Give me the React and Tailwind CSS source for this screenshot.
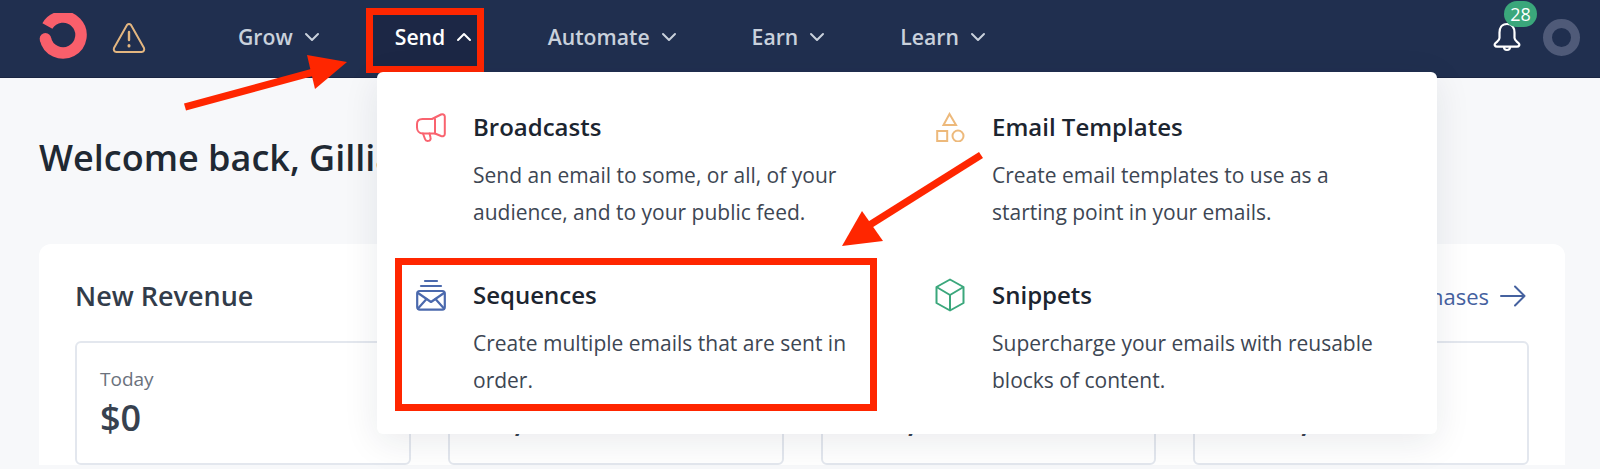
import React from "react";

const Chevron = ({ up, className }) => (
  <svg width="16" height="10" viewBox="0 0 16 10" fill="none" stroke="currentColor" strokeWidth="2" strokeLinecap="round" strokeLinejoin="round" className={className}>
    {up ? <path d="M2 8 L8 2 L14 8" /> : <path d="M2 2 L8 8 L14 2" />}
  </svg>
);

const NavItem = ({ label, className = "" }) => (
  <div className={`flex items-center gap-[11px] text-[21.2px] font-semibold text-[#c9d1dc] ${className}`}>
    <span>{label}</span>
    <Chevron />
  </div>
);

const Logo = () => (
  <svg width="50" height="48" viewBox="0 0 50 48" fill="none" className="shrink-0">
    <path d="M9.4 13 A18 18 0 1 1 7.4 25.7" stroke="#f95f6b" strokeWidth="11.5" />
    <circle cx="7.4" cy="25.7" r="5.75" fill="#f95f6b" />
  </svg>
);

const Warning = () => (
  <svg width="34" height="31" viewBox="0 0 34 31" fill="none" stroke="#e3b680" strokeWidth="2" strokeLinecap="round" strokeLinejoin="round" className="shrink-0 ml-[24px]">
    <path d="M15 3 Q17 0.8 19 3 L32 26 Q33 29.5 29.5 30 L4.5 30 Q1 29.5 2 26 Z" />
    <path d="M17 10 L17 18" strokeWidth="2.4" />
    <path d="M17 23.6 L17 23.9" strokeWidth="3" />
  </svg>
);

const Bell = () => (
  <svg width="28" height="30" viewBox="0 0 28 30" fill="none" stroke="#ffffff" strokeWidth="2.2" strokeLinecap="round" strokeLinejoin="round">
    <path d="M14 2 C8.5 2 6.5 6 6.5 10.5 L6.5 16 C6.5 18.5 4 19.5 2.2 21.5 C1 23 2 24.6 4 24.6 L24 24.6 C26 24.6 27 23 25.8 21.5 C24 19.5 21.5 18.5 21.5 16 L21.5 10.5 C21.5 6 19.5 2 14 2 Z" />
    <path d="M11 25 C11 29 17 29 17 25" />
  </svg>
);

const Megaphone = () => (
  <svg width="30" height="30" viewBox="0 0 30 30" fill="none" stroke="#f9636f" strokeWidth="2" strokeLinecap="round" strokeLinejoin="round">
    <path d="M25 2.5 C26.5 1.8 28.8 2.5 28.8 4.5 L28.8 22 C28.8 24 26.8 24.6 25 24 L19 21.5 L7 21.5 C3 21.5 1 18.5 1 15.5 L1 12 C1 9 3 7 6.5 7 L16 7 Z" />
    <path d="M19 7 L19 21.5" />
    <path d="M7 21.5 L9 27 C10 30 15.5 29.5 14.5 25.5 L13.6 21.5" />
  </svg>
);

const Envelope = () => (
  <svg width="30" height="32" viewBox="0 0 30 32" fill="none" stroke="#4b69ad" strokeWidth="2.2" strokeLinecap="round" strokeLinejoin="round">
    <path d="M9 2 L21 2" />
    <path d="M5 7 L25 7" />
    <rect x="1.2" y="12" width="27.6" height="18.6" rx="2.5" />
    <path d="M2 14 L15 23 L28 14" />
    <path d="M2 29.5 L10.5 20" />
    <path d="M28 29.5 L19.5 20" />
  </svg>
);

const Shapes = () => (
  <svg width="30" height="30" viewBox="0 0 30 30" fill="none" stroke="#edb97b" strokeWidth="2">
    <path d="M14.5 2 L21 13 L8.5 13 Z" strokeLinejoin="miter" />
    <rect x="2.2" y="19" width="10" height="10" />
    <circle cx="23" cy="24" r="5.5" />
  </svg>
);

const Cube = () => (
  <svg width="30" height="34" viewBox="0 0 30 34" fill="none" stroke="#3ba77c" strokeWidth="2" strokeLinejoin="round">
    <path d="M15 1.5 L28.5 9 L28.5 25 L15 32.5 L1.5 25 L1.5 9 Z" />
    <path d="M1.5 9 L15 17 L28.5 9" />
    <path d="M15 17 L15 32.5" />
  </svg>
);

const MenuItem = ({ icon, title, children }) => (
  <div className="flex">
    <div className="w-[30px] h-[36px] mr-[27px] shrink-0 flex items-center">{icon}</div>
    <div className="w-[385px]">
      <div className="text-[24px] leading-[36px] font-semibold text-[#1c2530]">{title}</div>
      <div className="mt-[12px] text-[21px] leading-[37px] text-[#3d4653]">{children}</div>
    </div>
  </div>
);

const StatBox = ({ label, value }) => (
  <div className="flex-1 h-[124px] rounded-[6px] border-2 border-[#e3e7ee] pl-[23px] pt-[22px]">
    <div className="text-[19px] leading-[28px] text-[#6b727d]">{label}</div>
    <div className="text-[36px] leading-[50px] font-semibold text-[#37414f]">{value}</div>
  </div>
);

export default function App() {
  return (
    <div className="relative w-[1600px] h-[469px] overflow-hidden bg-[#f7f8fa] font-['Open_Sans',sans-serif]">
      <header className="h-[78px] bg-[#202f4f] border-b border-[#1a2542] flex items-center pl-[38px] pr-[20px] pb-[3px]">
        <Logo />
        <Warning />
        <NavItem label="Grow" className="ml-[92px]" />
        <div className="ml-[46px] w-[118px] h-[65px] mt-[6px] border-[7px] border-[#ff2600] bg-[#1c2745] flex items-center gap-[11px] pl-[22px] pb-[7px] text-[21.2px] font-semibold text-white">
          <span>Send</span>
          <Chevron up />
        </div>
        <NavItem label="Automate" className="ml-[64px]" />
        <NavItem label="Earn" className="ml-[75px]" />
        <NavItem label="Learn" className="ml-[75px]" />
        <div className="ml-auto flex items-center">
          <div className="relative w-[28px] h-[30px] mr-[22px]">
            <Bell />
            <span className="absolute left-[11px] -top-[21px] w-[33px] h-[26px] rounded-full bg-[#3aa77b] text-white text-[18px] leading-[26px] text-center">28</span>
          </div>
          <div className="w-[37px] h-[37px] rounded-full border-[9px] border-[#4f5a78]" />
        </div>
      </header>

      <main className="pl-[39px] pr-[35px]">
        <h1 className="pt-[55px] text-[36px] leading-[50px] font-semibold text-[#1f2933]">Welcome back, Gillian</h1>
        <section className="mt-[61px] bg-white rounded-t-[12px] px-[36px] pt-[32px]">
          <div className="flex items-center justify-between h-[40px]">
            <h2 className="text-[27px] font-semibold text-[#323c4a]">New Revenue</h2>
            <div className="flex items-center gap-[11px] text-[22px] text-[#45619f] mr-[3px]">
              <span>Purchases</span>
              <svg width="26" height="22" viewBox="0 0 26 22" fill="none" stroke="currentColor" strokeWidth="2" strokeLinecap="round" strokeLinejoin="round">
                <path d="M1 11 L24.5 11 M15 1.5 L24.5 11 L15 20.5" />
              </svg>
            </div>
          </div>
          <div className="mt-[25px] flex gap-[37px]">
            <StatBox label="Today" value="$0" />
            <StatBox label={"\u00a0"} value="$1,000" />
            <StatBox label={"\u00a0"} value="$10,000" />
            <StatBox label={"\u00a0"} value="$100,000" />
          </div>
        </section>
      </main>

      <div className="absolute left-[377px] top-[72px] w-[1060px] rounded-[6px] bg-white shadow-[0_8px_36px_rgba(20,30,50,0.09)] pl-[39px] pt-[37px] pb-[35px] grid grid-cols-[519px_1fr] gap-y-[46px]">
        <MenuItem icon={<Megaphone />} title="Broadcasts">Send an email to some, or all, of your audience, and to your public feed.</MenuItem>
        <MenuItem icon={<Shapes />} title="Email Templates">Create email templates to use as a starting point in your emails.</MenuItem>
        <MenuItem icon={<Envelope />} title="Sequences">Create multiple emails that are sent in order.</MenuItem>
        <MenuItem icon={<Cube />} title="Snippets">Supercharge your emails with reusable blocks of content.</MenuItem>
        <div className="absolute left-[18px] top-[186px] w-[482px] h-[153px] border-[7px] border-[#ff2600]" />
      </div>

      <svg className="absolute inset-0 pointer-events-none" width="1600" height="469" viewBox="0 0 1600 469" fill="#ff2600" stroke="none">
        <path d="M184 103.5 L311 69 L313 76 L186 110.5 Z" />
        <path d="M347 62 L307 55 L315 89 Z" />
        <path d="M979 152 L983 158 L870 229 L866 223 Z" />
        <path d="M842 246 L862 211 L883 241 Z" />
      </svg>
    </div>
  );
}
